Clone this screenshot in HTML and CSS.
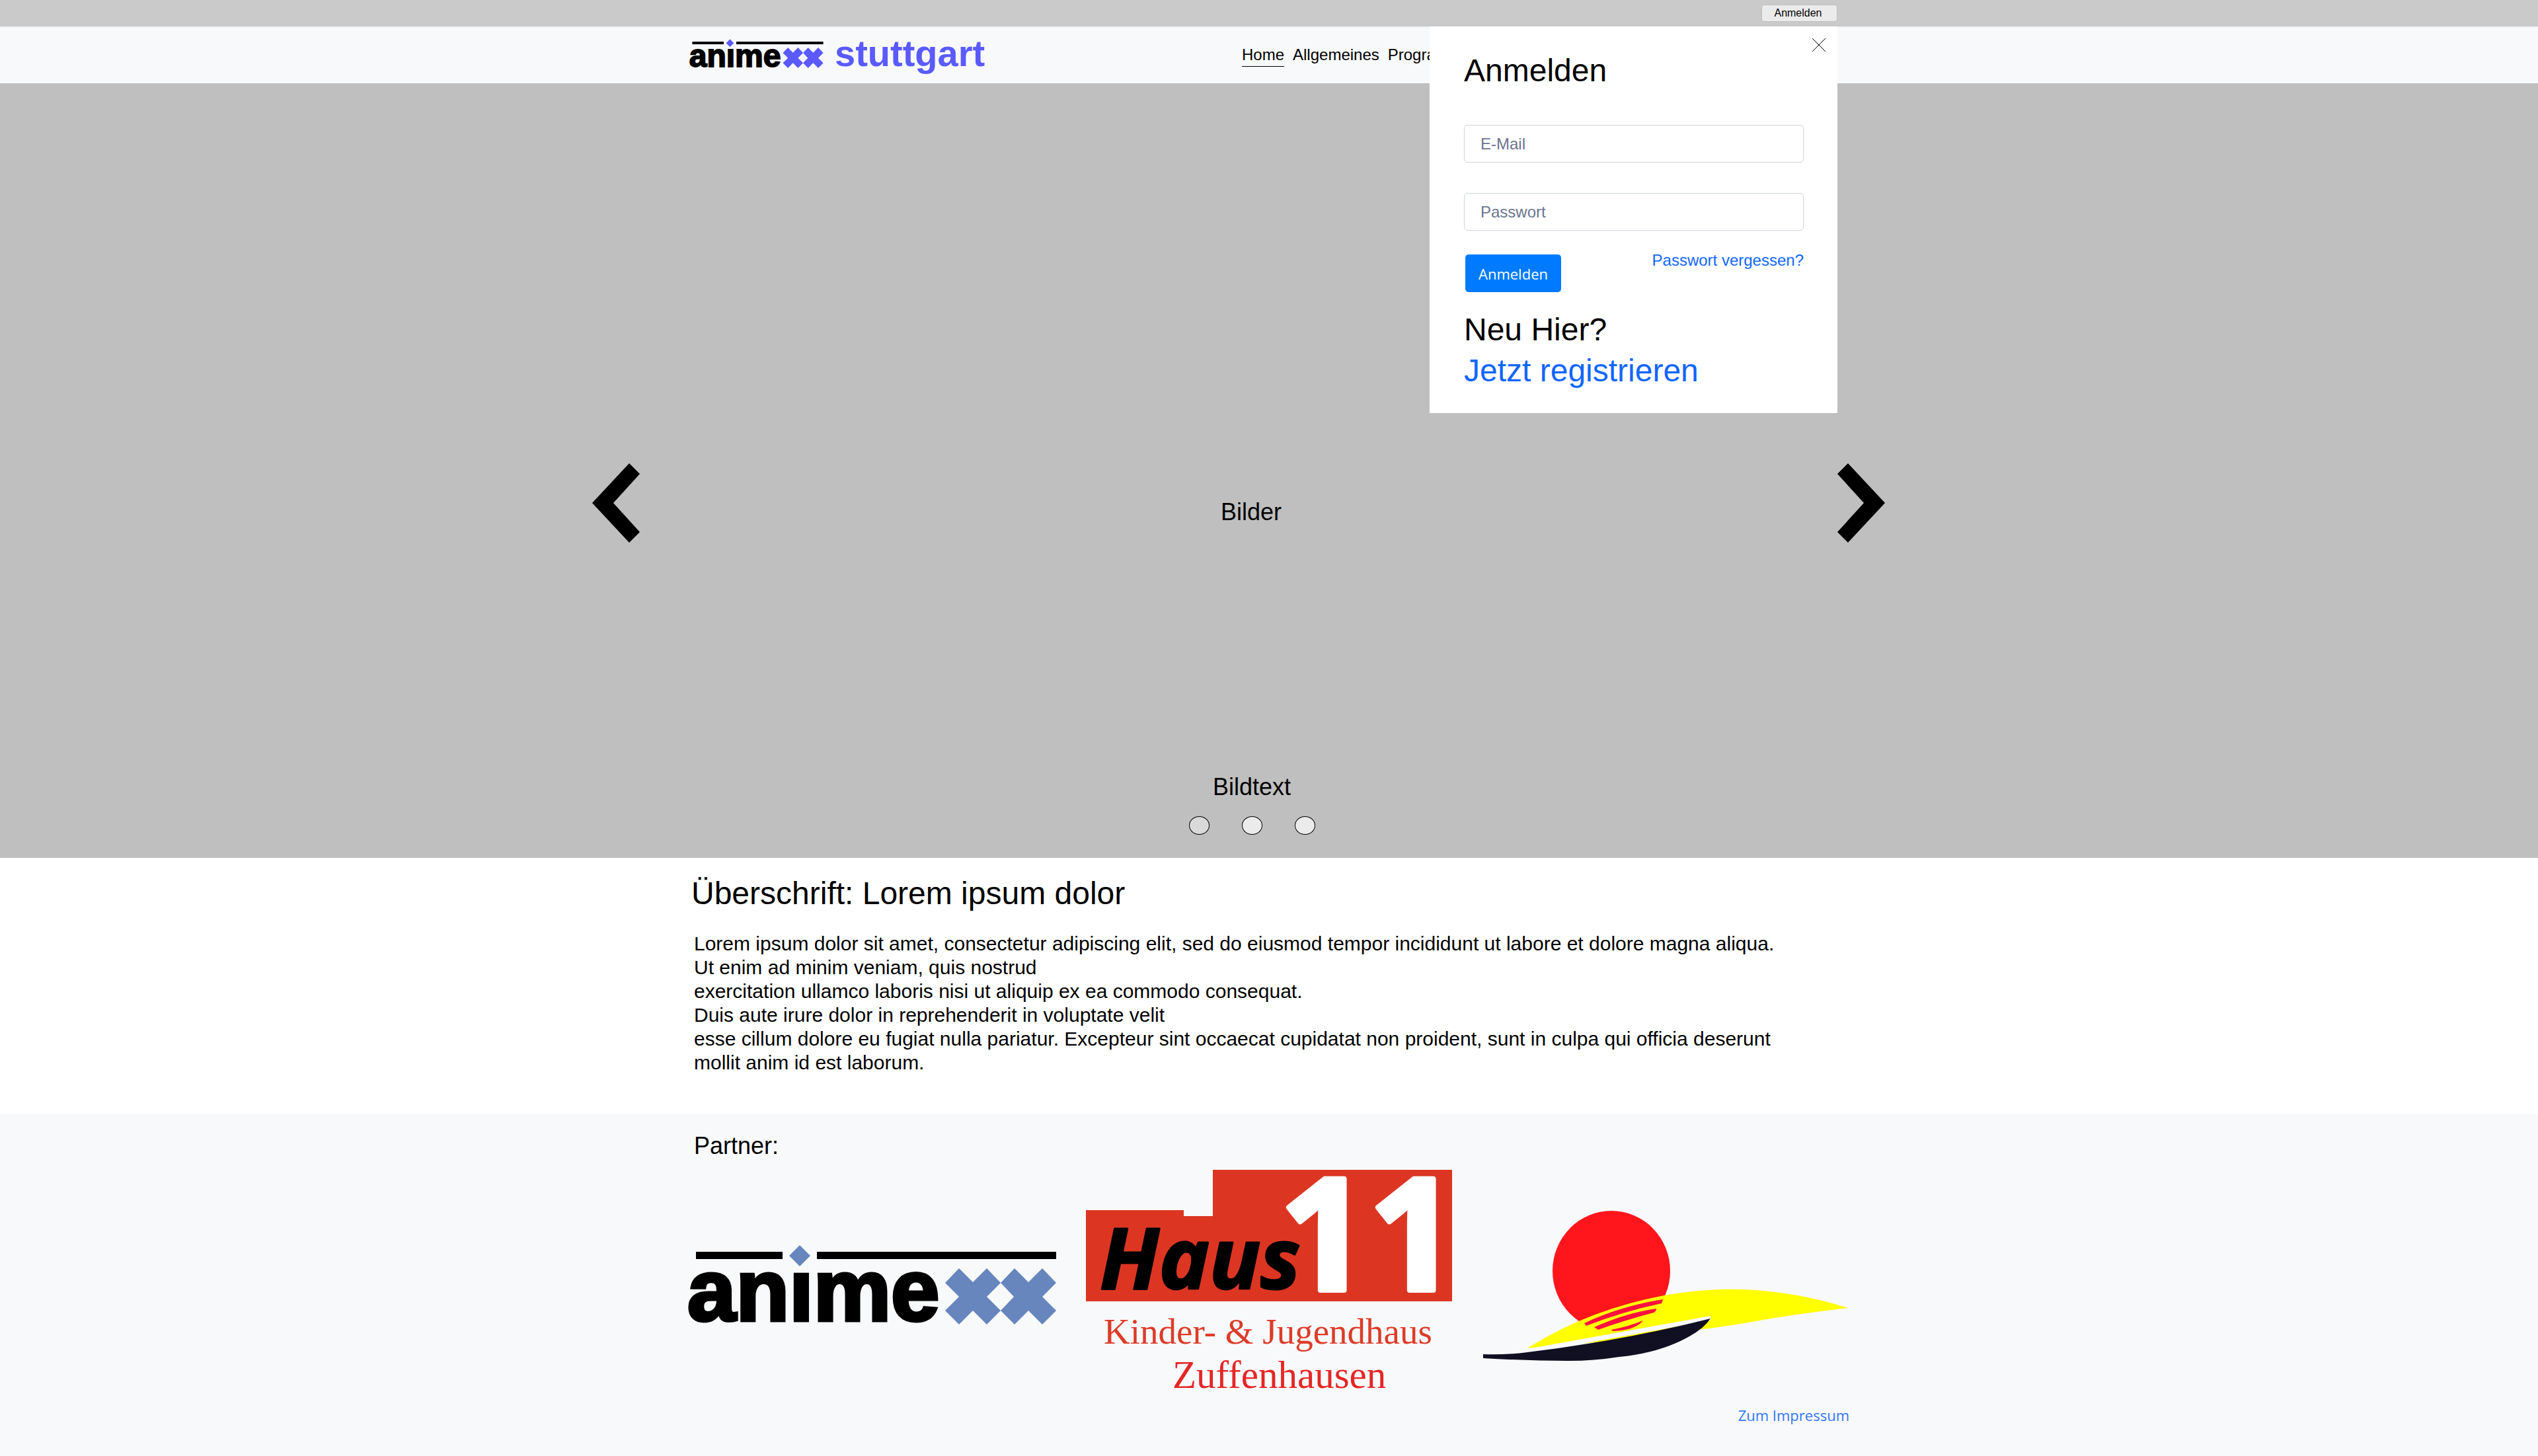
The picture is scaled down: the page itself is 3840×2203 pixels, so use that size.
FILE: index.html
```html
<!DOCTYPE html>
<html lang="de">
<head>
  <meta charset="utf-8">
  <title>Animexx Stuttgart</title>
  <link rel="stylesheet" href="styles.css">
</head>
<body>
  <svg class="sprite" aria-hidden="true">
    <symbol id="animexx" viewBox="0 0 556 121" overflow="visible">
      <path d="M11 11H142V22H11ZM194 11H556V22H194Z" fill="#000"/>
      <path d="M168 1L184 17L168 33L152 17Z" fill="currentColor"/>
      <text class="logo-anime" x="-2" y="115">anıme</text>
      <path fill="currentColor" d="M409 36L430 57L451 36L472 58L493 36L514 57L535 36L556 58L535 79L556 100L535 121L514 100L493 121L472 100L451 121L430 100L409 121L388 100L409 79L388 58ZM472 58L451 79L472 100L492 79Z" fill-rule="evenodd"/>
    </symbol>
  </svg>

  <div class="topbar">
    <div class="container topbar-inner">
      <button class="btn-small" type="button">Anmelden</button>
    </div>
  </div>

  <header class="header">
    <div class="container header-inner">
      <a class="brand" href="#" aria-label="Animexx Stuttgart">
        <svg class="brand-logo" viewBox="0 0 556 121"><use href="#animexx"/></svg>
        <span class="brand-name">stuttgart</span>
      </a>
      <nav class="nav">
        <a class="nav-link active" href="#">Home</a>
        <a class="nav-link" href="#">Allgemeines</a>
        <a class="nav-link" href="#">Programm</a>
      </nav>

      <section class="login" role="dialog" aria-labelledby="login-title">
        <button class="login-close" type="button" aria-label="Schließen">
          <svg viewBox="0 0 20 20"><path d="M0 0L20 20M20 0L0 20" stroke="#000" stroke-width="1"/></svg>
        </button>
        <h2 class="title" id="login-title">Anmelden</h2>
        <form class="login-form">
          <input class="field" type="email" placeholder="E-Mail" aria-label="E-Mail">
          <input class="field" type="password" placeholder="Passwort" aria-label="Passwort">
          <div class="login-row">
            <button class="btn-primary" type="button">Anmelden</button>
            <a class="forgot" href="#">Passwort vergessen?</a>
          </div>
        </form>
        <p class="register">Neu Hier?<br><a href="#">Jetzt registrieren</a></p>
      </section>
    </div>
  </header>

  <main>
    <section class="hero">
      <div class="stage">
        <button class="arrow" type="button" aria-label="Zurück">
          <svg viewBox="0 0 72 120"><path d="M0 60L56 0L72 16L32 60L72 104L56 120Z"/></svg>
        </button>
        <p class="slide">Bilder</p>
        <button class="arrow" type="button" aria-label="Weiter">
          <svg viewBox="0 0 72 120"><path d="M72 60L16 0L0 16L40 60L0 104L16 120Z"/></svg>
        </button>
      </div>
      <div class="caption">
        <p>Bildtext</p>
        <div class="dots">
          <button class="dot current" type="button" aria-label="Bild 1"></button>
          <button class="dot" type="button" aria-label="Bild 2"></button>
          <button class="dot" type="button" aria-label="Bild 3"></button>
        </div>
      </div>
    </section>

    <article class="container article">
      <h1 class="title">Überschrift: Lorem ipsum dolor</h1>
      <p class="text">Lorem ipsum dolor sit amet, consectetur adipiscing elit, sed do eiusmod tempor incididunt ut labore et dolore magna aliqua.<br>
        Ut enim ad minim veniam, quis nostrud<br>
        exercitation ullamco laboris nisi ut aliquip ex ea commodo consequat.<br>
        Duis aute irure dolor in reprehenderit in voluptate velit<br>
        esse cillum dolore eu fugiat nulla pariatur. Excepteur sint occaecat cupidatat non proident, sunt in culpa qui officia deserunt<br>
        mollit anim id est laborum.</p>
    </article>
  </main>

  <footer class="footer">
    <div class="container">
      <h2 class="partner-title">Partner:</h2>
      <div class="partners">
        <a class="partner partner-animexx" href="#" aria-label="Animexx">
          <svg viewBox="0 0 556 121"><use href="#animexx"/></svg>
        </a>
        <a class="partner" href="#" aria-label="Haus 11">
          <svg viewBox="0 0 556 346">
            <path d="M1 61H149V70H193V0H555V199H1Z" fill="#dc3623"/>
            <text class="haus" x="22" y="180">Haus</text>
            <text class="eleven" x="294" y="182">11</text>
            <text class="haus-line" x="28" y="263">Kinder- &amp; Jugendhaus</text>
            <text class="haus-place" x="132" y="330">Zuffenhausen</text>
          </svg>
        </a>
        <a class="partner" href="#" aria-label="Partner">
          <svg viewBox="0 0 556 226">
            <ellipse cx="196" cy="93" rx="89" ry="91" fill="#ff161c"/>
            <path d="M69 210Q160 152 276 130Q340 119 395 121Q475 124 554 149Q470 159 420 168Q370 177 334 181L300 190Z" fill="#ff0"/>
            <path d="M69 211L346 161V168L69 218Z" fill="#fafafa"/>
            <path d="M2 219Q40 220 69 216Q210 199 346 165Q336 180 314 192Q270 217 208 223Q170 229 131 229Q70 229 2 225Z" fill="#110f22"/>
            <path d="M155 172Q210 146 274 136L272 142Q215 154 158 176Z" fill="#ff1040"/>
            <path d="M170 178Q220 156 264 150Q264 154 260 156Q215 168 176 182Z" fill="#ff1040"/>
            <path d="M196 182Q222 177 244 168Q232 183 198 184Z" fill="#ff1040"/>
          </svg>
        </a>
      </div>
      <a class="imprint" href="#">Zum Impressum</a>
    </div>
  </footer>
</body>
</html>
```
FILE: styles.css
```css
* {
  box-sizing: border-box;
}

body {
  margin: 0;
  background: #fff;
  color: #000;
  font-family: "Liberation Sans", Arial, sans-serif;
  font-size: 24px;
  line-height: 28px;
}

h1, h2, p {
  margin: 0;
  font-weight: 400;
}

a {
  color: #1166ff;
  text-decoration: none;
}

button {
  margin: 0;
  padding: 0;
  border: 0;
  background: none;
  color: inherit;
  font: inherit;
  cursor: pointer;
}

svg {
  display: block;
  width: 100%;
  overflow: visible;
}

.sprite {
  position: absolute;
  width: 0;
  height: 0;
}

.container {
  max-width: 1756px;
  margin: 0 auto;
}

.title {
  font-size: 48px;
  line-height: 56px;
}

/* Top bar */
.topbar {
  background: #cacaca;
  border-bottom: 1px solid #e9eaeb;
}

.topbar-inner {
  display: flex;
  justify-content: flex-end;
  padding: 7px 18px;
}

.btn-small {
  width: 115px;
  height: 26px;
  padding-right: 4px;
  border: 1px solid #bfbfbf;
  border-radius: 4px;
  background: #ebebeb;
  font-size: 16px;
  line-height: 24px;
}

/* Header */
.header {
  background: #f8f9fb;
}

.header-inner {
  position: relative;
  display: grid;
  grid-template-columns: 837px 1fr;
  align-items: start;
}

.brand {
  display: flex;
  gap: 16px;
  padding-top: 18px;
  color: #5a5aff;
}

.brand-logo {
  width: 205px;
  height: 44px;
}

.brand-name {
  font-size: 56px;
  font-weight: 700;
  line-height: 44px;
}

.logo-anime {
  fill: #000;
  stroke: #000;
  stroke-width: 5px;
  font-family: "Liberation Sans", Arial, sans-serif;
  font-size: 132px;
  font-weight: 700;
}

.nav {
  display: flex;
  gap: 13px;
  padding: 28px 0 25px;
}

.nav-link {
  padding-bottom: 3px;
  border-bottom: 1px solid transparent;
  color: #000;
}

.nav-link.active {
  border-color: #000;
}

/* Login panel, opened over the page below the top bar */
.login {
  position: absolute;
  top: -1px;
  right: 18px;
  z-index: 10;
  width: 617px;
  padding: 39px 51px 33px 52px;
  background: #fff;
}

.login-close {
  position: absolute;
  top: 18px;
  right: 18px;
  width: 20px;
  height: 20px;
}

.login-form {
  display: flex;
  flex-direction: column;
  margin-top: 54px;
}

.field {
  width: 100%;
  height: 57px;
  margin-bottom: 46px;
  padding: 0 24px;
  border: 1px solid #ced4da;
  border-radius: 5px;
  background: #fff;
  color: #000;
  font: inherit;
}

.field::placeholder {
  color: #6c7590;
  opacity: 1;
}

.field[type="password"] {
  margin-bottom: 31px;
}

.login-row {
  display: flex;
  justify-content: space-between;
  align-items: flex-start;
}

.btn-primary {
  height: 57px;
  margin: 5px 0 0 2px;
  padding: 0 20px;
  border-radius: 5px;
  background: #007bff;
  color: #fff;
  font-family: "Open Sans", sans-serif;
  font-size: 22px;
}

.register {
  margin-top: 26px;
  font-size: 48px;
  line-height: 62px;
}

/* Picture carousel */
.hero {
  padding: 575px 92px 35px 0;
  background: #bfbfbf;
  font-size: 36px;
  line-height: 40px;
}

.stage,
.caption {
  max-width: 1957px;
  margin: 0 auto;
}

.stage {
  display: flex;
  justify-content: space-between;
  align-items: center;
}

.arrow {
  width: 72px;
  height: 120px;
}

.slide {
  padding: 27px 0 0 38px;
}

.caption {
  display: flex;
  flex-direction: column;
  align-items: center;
  gap: 24px;
  padding: 350px 0 0 40px;
}

.dots {
  display: flex;
  gap: 49px;
}

.dot {
  width: 31px;
  height: 28px;
  border: 1px solid #000;
  border-radius: 50%;
  background: #ebebeb;
}

.dot.current {
  background: #d9d9d9;
}

/* Article */
.article {
  padding: 26px 4px 59px;
}

.text {
  margin-top: 30px;
  padding-left: 4px;
  font-size: 30px;
  line-height: 36px;
}

/* Footer */
.footer {
  padding: 29px 0 47px;
  background: #f8f9fb;
}

.partner-title {
  padding-left: 8px;
  font-size: 36px;
  line-height: 40px;
}

.partners {
  display: grid;
  grid-template-columns: repeat(3, 1fr);
  gap: 44px;
  align-items: center;
  margin-top: 16px;
}

.partner-animexx {
  color: #6786be;
}

.haus {
  stroke: #000;
  stroke-width: 3px;
  stroke-linejoin: round;
  font-family: "Open Sans", sans-serif;
  font-size: 128px;
  font-style: italic;
  font-weight: 700;
}

.eleven {
  fill: #fff;
  stroke: #fff;
  stroke-width: 8px;
  stroke-linejoin: round;
  font-family: "Open Sans", sans-serif;
  font-size: 236px;
  font-weight: 700;
}

.haus-line,
.haus-place {
  fill: #dc3c28;
  font-family: "Liberation Serif", "Times New Roman", serif;
  font-size: 55px;
}

.haus-place {
  fill: #e52626;
  font-size: 59px;
}

.imprint {
  display: block;
  margin-top: 10px;
  color: #3377f5;
  font-family: "Open Sans", sans-serif;
  font-size: 22px;
  line-height: 30px;
  text-align: right;
}
```
